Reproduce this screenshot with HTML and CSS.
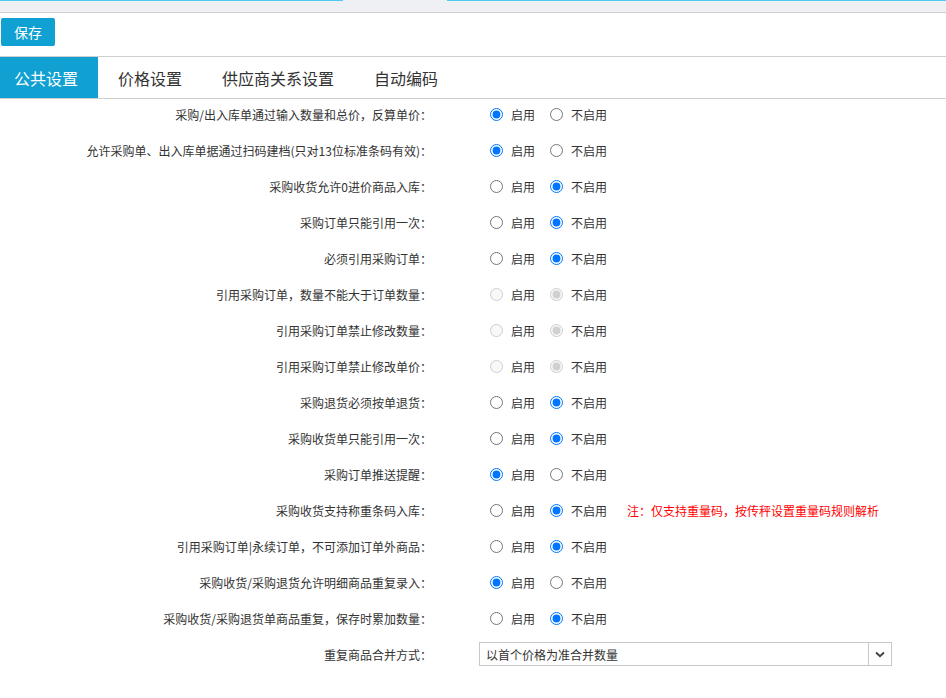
FILE: index.html
```html
<!DOCTYPE html>
<html lang="zh-CN">
  <head>
    <meta charset="UTF-8" />
    <title>采购设置</title>
    <link rel="stylesheet" href="styles.css">
  </head>
  <body>
    <div class="top-strip">
      <span class="strip-line"></span>
      <span class="strip-gap"></span>
      <span class="strip-line"></span>
    </div>
    <div class="toolbar">
      <button class="btn-save">保存</button>
    </div>
    <nav class="tabs">
      <a class="tab active">公共设置</a>
      <a class="tab">价格设置</a>
      <a class="tab">供应商关系设置</a>
      <a class="tab">自动编码</a>
    </nav>
    <form class="settings">
      <div class="row">
        <label class="row-label">采购/出入库单通过输入数量和总价，反算单价：</label>
        <div class="row-value">
          <label class="opt"><input type="radio" name="r1" checked />启用</label>
          <label class="opt"><input type="radio" name="r1" />不启用</label>
        </div>
      </div>
      <div class="row">
        <label class="row-label">允许采购单、出入库单据通过扫码建档(只对13位标准条码有效)：</label>
        <div class="row-value">
          <label class="opt"><input type="radio" name="r2" checked />启用</label>
          <label class="opt"><input type="radio" name="r2" />不启用</label>
        </div>
      </div>
      <div class="row">
        <label class="row-label">采购收货允许0进价商品入库：</label>
        <div class="row-value">
          <label class="opt"><input type="radio" name="r3" />启用</label>
          <label class="opt"><input type="radio" name="r3" checked />不启用</label>
        </div>
      </div>
      <div class="row">
        <label class="row-label">采购订单只能引用一次：</label>
        <div class="row-value">
          <label class="opt"><input type="radio" name="r4" />启用</label>
          <label class="opt"><input type="radio" name="r4" checked />不启用</label>
        </div>
      </div>
      <div class="row">
        <label class="row-label">必须引用采购订单：</label>
        <div class="row-value">
          <label class="opt"><input type="radio" name="r5" />启用</label>
          <label class="opt"><input type="radio" name="r5" checked />不启用</label>
        </div>
      </div>
      <div class="row">
        <label class="row-label">引用采购订单，数量不能大于订单数量：</label>
        <div class="row-value">
          <label class="opt"><input type="radio" name="r6" disabled />启用</label>
          <label class="opt"><input type="radio" name="r6" checked disabled />不启用</label>
        </div>
      </div>
      <div class="row">
        <label class="row-label">引用采购订单禁止修改数量：</label>
        <div class="row-value">
          <label class="opt"><input type="radio" name="r7" disabled />启用</label>
          <label class="opt"><input type="radio" name="r7" checked disabled />不启用</label>
        </div>
      </div>
      <div class="row">
        <label class="row-label">引用采购订单禁止修改单价：</label>
        <div class="row-value">
          <label class="opt"><input type="radio" name="r8" disabled />启用</label>
          <label class="opt"><input type="radio" name="r8" checked disabled />不启用</label>
        </div>
      </div>
      <div class="row">
        <label class="row-label">采购退货必须按单退货：</label>
        <div class="row-value">
          <label class="opt"><input type="radio" name="r9" />启用</label>
          <label class="opt"><input type="radio" name="r9" checked />不启用</label>
        </div>
      </div>
      <div class="row">
        <label class="row-label">采购收货单只能引用一次：</label>
        <div class="row-value">
          <label class="opt"><input type="radio" name="r10" />启用</label>
          <label class="opt"><input type="radio" name="r10" checked />不启用</label>
        </div>
      </div>
      <div class="row">
        <label class="row-label">采购订单推送提醒：</label>
        <div class="row-value">
          <label class="opt"><input type="radio" name="r11" checked />启用</label>
          <label class="opt"><input type="radio" name="r11" />不启用</label>
        </div>
      </div>
      <div class="row">
        <label class="row-label">采购收货支持称重条码入库：</label>
        <div class="row-value">
          <label class="opt"><input type="radio" name="r12" />启用</label>
          <label class="opt"><input type="radio" name="r12" checked />不启用</label>
          <span class="note">注：仅支持重量码，按传秤设置重量码规则解析</span>
        </div>
      </div>
      <div class="row">
        <label class="row-label">引用采购订单|永续订单，不可添加订单外商品：</label>
        <div class="row-value">
          <label class="opt"><input type="radio" name="r13" />启用</label>
          <label class="opt"><input type="radio" name="r13" checked />不启用</label>
        </div>
      </div>
      <div class="row">
        <label class="row-label">采购收货/采购退货允许明细商品重复录入：</label>
        <div class="row-value">
          <label class="opt"><input type="radio" name="r14" checked />启用</label>
          <label class="opt"><input type="radio" name="r14" />不启用</label>
        </div>
      </div>
      <div class="row">
        <label class="row-label">采购收货/采购退货单商品重复，保存时累加数量：</label>
        <div class="row-value">
          <label class="opt"><input type="radio" name="r15" />启用</label>
          <label class="opt"><input type="radio" name="r15" checked />不启用</label>
        </div>
      </div>
      <div class="row">
        <label class="row-label">重复商品合并方式：</label>
        <div class="row-value">
          <div class="combo">
            <span class="combo-text">以首个价格为准合并数量</span>
            <span class="combo-btn">
              <svg width="10" height="7" viewBox="0 0 10 7"><path d="M1 1.5 L5 5.2 L9 1.5" fill="none" stroke="#444" stroke-width="2"/></svg>
            </span>
          </div>
        </div>
      </div>
    </form>
  </body>
</html>
```

FILE: styles.css
```css
body {
  margin: 0;
  font-family: "Noto Sans CJK SC", "Microsoft YaHei", sans-serif;
  font-size: 12px;
  color: #333;
  background: #fff;
}
.top-strip {
  display: flex;
  height: 12px;
  background-color: #eff0f4;
  border-bottom: 1px solid #cfcfcf;
}
.strip-line {
  flex: 1;
  height: 1px;
  background-color: #4fc8f5;
}
.strip-gap {
  width: 104px;
}
.strip-line:first-child {
  flex: 0 0 343px;
}
.toolbar {
  height: 38px;
  padding: 5px 0 0 1px;
  display: flex;
  align-items: flex-start;
  border-bottom: 1px solid #cfcfcf;
}
.btn-save {
  width: 54px;
  height: 28px;
  border: none;
  border-radius: 2px;
  background-color: #10a0d1;
  color: white;
  font-family: inherit;
  font-size: 14px;
  padding: 0;
}
.tabs {
  display: flex;
  height: 41px;
  border-bottom: 1px solid #cfcfcf;
}
.tab {
  display: flex;
  align-items: center;
  padding: 0 20px;
  font-size: 16px;
  color: #333;
}
.tab.active {
  background-color: #10a0d1;
  color: white;
  padding-left: 14px;
}
.settings {
  margin-top: -3px;
}
.row {
  display: flex;
  align-items: center;
  height: 36px;
}
.row-label {
  width: 432px;
  text-align: right;
  flex-shrink: 0;
}
.row-value {
  display: flex;
  align-items: center;
  padding-left: 58px;
}
.opt {
  display: flex;
  align-items: center;
  margin-right: 15px;
}
.opt input {
  margin: 0 8px 0 0;
  width: 13px;
  height: 13px;
}
.note {
  color: #ff0000;
  margin-left: 5px;
}
.combo {
  display: flex;
  width: 411px;
  height: 22px;
  margin-left: -11px;
  border: 1px solid #c8c8c8;
}
.combo-text {
  flex: 1;
  display: flex;
  align-items: center;
  padding-left: 6px;
}
.combo-btn {
  width: 22px;
  display: flex;
  align-items: center;
  justify-content: center;
  border-left: 1px solid #c8c8c8;
}
```
